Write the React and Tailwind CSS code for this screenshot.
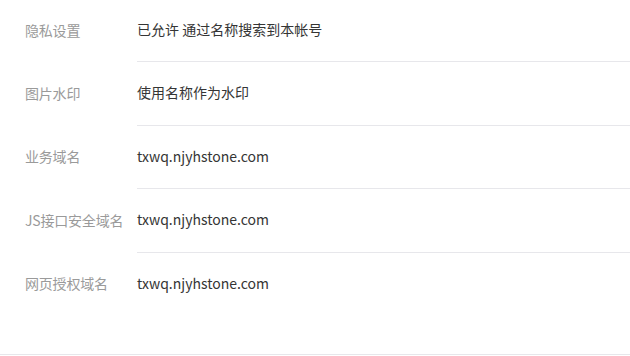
import React from "react";

const rows = [
  { label: "隐私设置", value: "已允许 通过名称搜索到本帐号", h: "h-[62px]" },
  { label: "图片水印", value: "使用名称作为水印", h: "h-[64px]" },
  { label: "业务域名", value: "txwq.njyhstone.com", h: "h-[63px]" },
  { label: "JS接口安全域名", value: "txwq.njyhstone.com", h: "h-[64px]" },
  { label: "网页授权域名", value: "txwq.njyhstone.com", h: "h-[62px]" },
];

const App = () => {
  return (
    <div
      className="w-[630px] h-[355px] bg-white border-b border-[#e7e7eb] text-[14px]"
      style={{ fontFamily: '"Noto Sans CJK SC", "Noto Sans", sans-serif' }}
    >
      {rows.map((row, i) => (
        <div key={row.label} className="flex">
          <div className="w-[137px] shrink-0 pl-[25px] pb-[2px] flex items-center text-[#9a9a9a] tracking-[-0.2px] whitespace-nowrap">
            {row.label}
          </div>
          <div
            className={`flex-1 flex items-center pb-[2px] text-[#353535] ${row.h} ${
              i < rows.length - 1 ? "border-b border-[#e7e7eb]" : ""
            }`}
          >
            {row.value}
          </div>
        </div>
      ))}
    </div>
  );
};

export default App;
